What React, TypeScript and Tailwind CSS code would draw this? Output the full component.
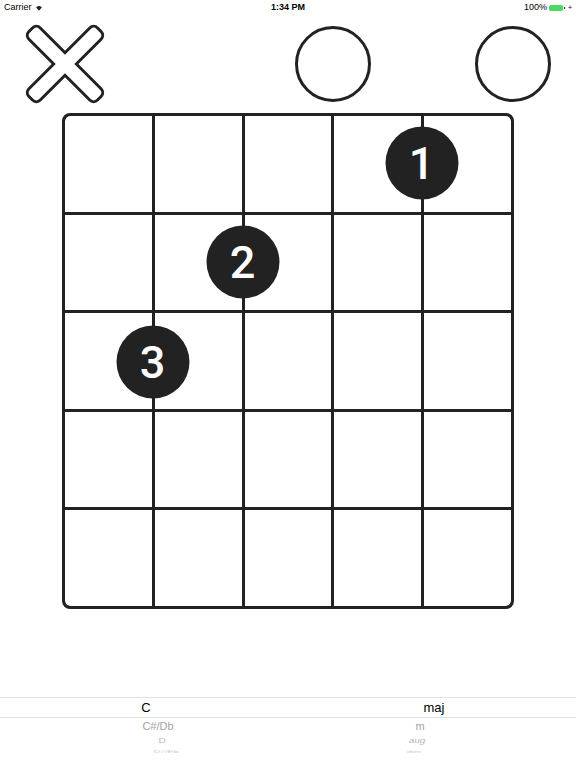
import React from "react";

const font = { fontFamily: '"Liberation Sans", Arial, sans-serif' };

function StatusBar() {
  return (
    <div className="relative flex h-[15px] items-center justify-between px-[4px] text-[9px] text-black" style={font}>
      <div className="flex items-center gap-[3px]">
        <span>Carrier</span>
        <svg width="8" height="6" viewBox="0 0 10 8">
          <path d="M5 7.5 L1.2 3.2 A5.6 5.6 0 0 1 8.8 3.2 Z" fill="#222" />
        </svg>
      </div>
      <div className="absolute left-1/2 top-0 flex h-[15px] -translate-x-1/2 items-center font-bold">1:34 PM</div>
      <div className="flex items-center gap-[2px]">
        <span>100%</span>
        <div className="flex items-center">
          <div className="h-[6px] w-[14px] rounded-[1.5px] border border-[#4cd964] bg-[#4cd964]" />
          <div className="ml-[1px] h-[2px] w-[1px] bg-[#333]" />
        </div>
        <span className="ml-[1px] text-[7px] leading-none">+</span>
      </div>
    </div>
  );
}

function XMark() {
  return (
    <svg width="82" height="82" viewBox="-41 -41 82 82" className="translate-x-[2px]">
      <g transform="rotate(45)">
        <rect x="-47" y="-6.5" width="94" height="13" rx="4" fill="white" stroke="#222" strokeWidth="6" />
        <rect x="-6.5" y="-47" width="13" height="94" rx="4" fill="white" stroke="#222" strokeWidth="6" />
        <rect x="-47" y="-6.5" width="94" height="13" rx="4" fill="white" />
        <rect x="-6.5" y="-47" width="13" height="94" rx="4" fill="white" />
      </g>
    </svg>
  );
}

function OpenMark() {
  return <div className="h-[76px] w-[76px] rounded-full border-[3px] border-[#222]" />;
}

function Dot({ n, x, y }: { n: number; x: number; y: number }) {
  return (
    <div
      className="absolute flex h-[73px] w-[73px] -translate-x-1/2 -translate-y-1/2 items-center justify-center rounded-full bg-[#222] text-[45px] font-medium leading-none text-white"
      style={{ left: x, top: y, fontFamily: 'Roboto, "Liberation Sans", sans-serif' }}
    >
      {n}
    </div>
  );
}

export default function App() {
  const markers = ["x", "", "", "o", "", "o"];
  return (
    <div className="h-[768px] w-[576px] overflow-hidden bg-white" style={font}>
      <StatusBar />
      <div className="ml-[18px] mt-[11px] flex h-[76px]">
        {markers.map((m, i) => (
          <div key={i} className="flex w-[90px] items-center justify-center">
            {m === "x" && <XMark />}
            {m === "o" && <OpenMark />}
          </div>
        ))}
      </div>
      <div className="relative ml-[62px] mt-[11px] h-[496px] w-[452px]">
        <div className="grid h-full w-full grid-cols-5 grid-rows-5 gap-[3px] overflow-hidden rounded-[8px] border-[3px] border-[#222] bg-[#222]">
          {Array.from({ length: 25 }).map((_, i) => (
            <div
              key={i}
              className={
                "bg-white " +
                (i === 0 ? "rounded-tl-[5px] " : "") +
                (i === 4 ? "rounded-tr-[5px] " : "") +
                (i === 20 ? "rounded-bl-[5px] " : "") +
                (i === 24 ? "rounded-br-[5px] " : "")
              }
            />
          ))}
        </div>
        <Dot n={1} x={359.5} y={49.5} />
        <Dot n={2} x={180.5} y={149} />
        <Dot n={3} x={90.5} y={249} />
      </div>
      <div className="mt-[88px]">
        <div className="h-px w-full bg-[#e3e3e3]" />
        <div className="flex h-[19px] items-center text-[13px] text-black">
          <div className="flex w-1/2 justify-center"><span className="translate-x-[2px]">C</span></div>
          <div className="flex w-1/2 justify-center"><span className="translate-x-[2px]">maj</span></div>
        </div>
        <div className="h-px w-full bg-[#e3e3e3]" />
        <div className="flex h-[16px] items-center text-[11px] text-[#a3a3a3]">
          <div className="flex w-1/2 justify-center"><span className="translate-x-[14px]">C#/Db</span></div>
          <div className="flex w-1/2 justify-center"><span className="-translate-x-[12px]">m</span></div>
        </div>
        <div className="flex h-[13px] items-center text-[10px] text-[#b8b8b8]">
          <div className="flex w-1/2 justify-center"><span className="translate-x-[18px] scale-y-[0.7]">D</span></div>
          <div className="flex w-1/2 justify-center"><span className="-translate-x-[15px] scale-y-[0.7] italic">aug</span></div>
        </div>
        <div className="flex h-[10px] items-center text-[9px] text-[#cccccc]">
          <div className="flex w-1/2 justify-center"><span className="translate-x-[22px] scale-y-[0.45]">D#/Eb</span></div>
          <div className="flex w-1/2 justify-center"><span className="-translate-x-[18px] scale-y-[0.45]">dim</span></div>
        </div>
      </div>
    </div>
  );
}
